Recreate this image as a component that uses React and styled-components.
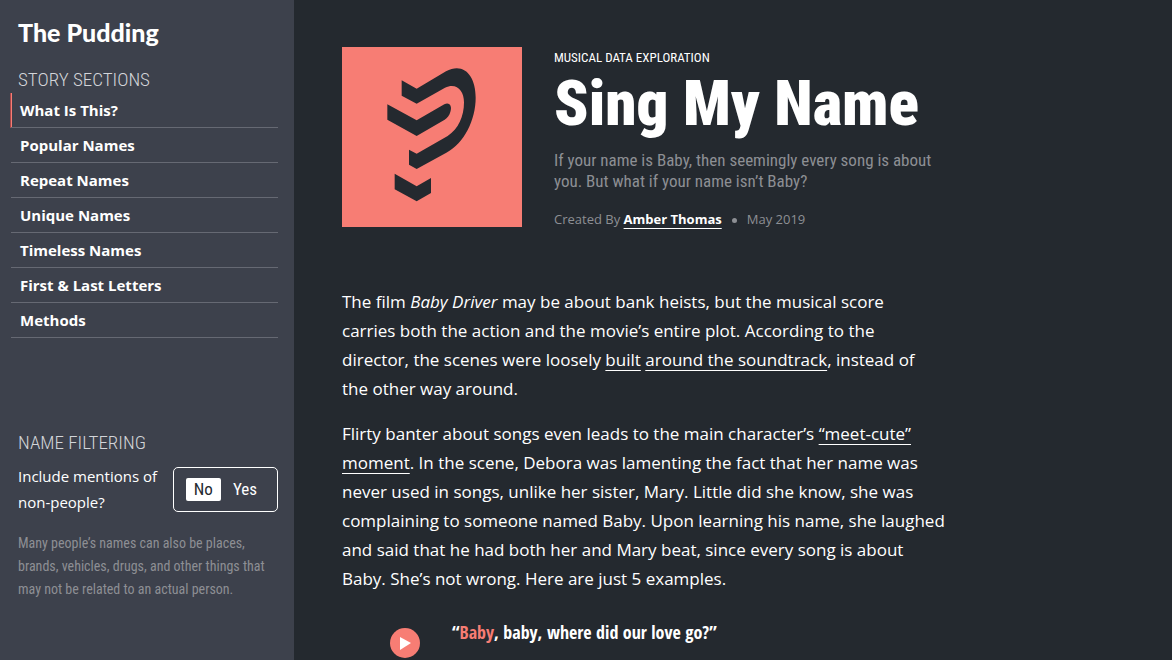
import React, { useState } from 'react';
import styled, { createGlobalStyle } from 'styled-components';

const GlobalStyle = createGlobalStyle`
  :root {
    --bg: #24292f;
    --side: #3d414c;
    --accent: #f77d74;
    --muted: #8d8f94;
    --sans: 'Open Sans', sans-serif;
    --narrow: 'Roboto Condensed', sans-serif;
  }

  * {
    box-sizing: border-box;
  }

  body {
    margin: 0;
    background: var(--bg);
    color: #ffffff;
    font-family: var(--sans);
  }
`;

const Page = styled.div`
  display: flex;
  min-height: 100vh;
`;

const Sidebar = styled.aside`
  flex: 0 0 294px;
  padding: 15px 16px 16px 11px;
  background: var(--side);
`;

const Logo = styled.a`
  display: block;
  padding-left: 7px;
  margin-bottom: 18px;
  color: #ffffff;
  font-family: Lato, sans-serif;
  font-weight: 900;
  font-size: 25px;
  line-height: 34px;
  text-decoration: none;
`;

const SideTitle = styled.h2`
  margin: 0;
  padding-left: 7px;
  color: #d3d5d9;
  font-family: var(--narrow);
  font-weight: 300;
  font-size: 19px;
  line-height: 26px;
  text-transform: uppercase;
`;

const NavLink = styled.a`
  display: block;
  padding-left: 9px;
  border-bottom: 1px solid #666973;
  box-shadow: ${({ $active }) => ($active ? 'inset 1px 0 0 #f77d74, -1px 0 0 #a8484a' : 'none')};
  color: #ffffff;
  font-weight: 700;
  font-size: 15px;
  line-height: 34px;
  text-decoration: none;
`;

const Filtering = styled.section`
  margin-top: 92px;
`;

const FilterRow = styled.div`
  display: flex;
  align-items: center;
  justify-content: space-between;
  margin-top: 7px;
  padding-left: 7px;
`;

const FilterLabel = styled.span`
  flex: 0 1 150px;
  font-size: 15px;
  line-height: 26px;
`;

const Toggle = styled.div`
  display: flex;
  gap: 4px;
  padding: 10px 12px;
  border: 1px solid #ffffff;
  border-radius: 5px;
`;

const ToggleButton = styled.button`
  height: 23px;
  padding: 0 8px;
  border: 0;
  border-radius: 2px;
  background: ${({ $on }) => ($on ? '#ffffff' : 'transparent')};
  color: ${({ $on }) => ($on ? '#24292f' : '#ffffff')};
  font-family: var(--narrow);
  font-size: 17px;
  line-height: 23px;
  cursor: pointer;
`;

const FilterNote = styled.p`
  margin: 17px 0 0;
  padding-left: 7px;
  color: var(--muted);
  font-family: var(--narrow);
  font-size: 14px;
  line-height: 23px;
`;

const Main = styled.main`
  flex: 1;
  min-width: 0;
  padding: 47px 48px 0;
`;

const Article = styled.article`
  max-width: 605px;
`;

const Header = styled.header`
  display: flex;
  align-items: flex-start;
  gap: 32px;
  margin-bottom: 57px;
`;

const Cover = styled.svg`
  flex: 0 0 180px;
  height: 180px;
  background: var(--accent);
`;

const Kicker = styled.p`
  margin: 0;
  font-family: var(--narrow);
  font-size: 13px;
  line-height: 22px;
  text-transform: uppercase;
`;

const Title = styled.h1`
  margin: 2px 0 13px;
  font-family: var(--narrow);
  font-weight: 900;
  font-size: 63px;
  line-height: 66px;
  white-space: nowrap;
`;

const Summary = styled.p`
  margin: 0 0 16px;
  color: var(--muted);
  font-family: var(--narrow);
  font-size: 17px;
  line-height: 21px;
`;

const Byline = styled.p`
  margin: 0;
  color: var(--muted);
  font-size: 13px;
  line-height: 22px;
`;

const Dot = styled.span`
  display: inline-block;
  width: 5px;
  height: 5px;
  margin: 0 10px;
  border-radius: 50%;
  background: var(--muted);
  vertical-align: middle;
`;

const TextLink = styled.a`
  color: #ffffff;
  font-weight: ${({ $bold }) => ($bold ? 700 : 400)};
  text-decoration: underline;
  text-decoration-thickness: 1px;
  text-decoration-skip-ink: none;
  text-underline-offset: 4px;
`;

const Paragraph = styled.p`
  max-width: ${({ $lead }) => ($lead ? '590px' : 'none')};
  margin: 0 0 16px;
  font-size: 17px;
  line-height: 29px;
`;

const Track = styled.div`
  display: flex;
  align-items: flex-start;
  gap: 32px;
  margin-top: 27px;
  padding-left: 48px;
`;

const PlayButton = styled.button`
  display: flex;
  width: 30px;
  height: 30px;
  margin-top: 8px;
  padding: 0;
  border: 0;
  border-radius: 50%;
  background: var(--accent);
  cursor: pointer;
`;

const Lyric = styled.p`
  margin: 0;
  font-family: 'Open Sans Condensed', sans-serif;
  font-weight: 700;
  font-size: 18px;
  line-height: 24px;

  em {
    color: var(--accent);
    font-style: normal;
  }
`;

const sections = [
  'What Is This?',
  'Popular Names',
  'Repeat Names',
  'Unique Names',
  'Timeless Names',
  'First & Last Letters',
  'Methods',
];

const App = () => {
  const [active, setActive] = useState(sections[0]);
  const [include, setInclude] = useState('No');

  return (
    <Page>
      <GlobalStyle />
      <Sidebar>
        <Logo href="#home">The Pudding</Logo>
        <SideTitle>Story Sections</SideTitle>
        <nav>
          {sections.map((name) => (
            <NavLink key={name} href="#story" $active={name === active} onClick={() => setActive(name)}>
              {name}
            </NavLink>
          ))}
        </nav>
        <Filtering>
          <SideTitle>Name Filtering</SideTitle>
          <FilterRow>
            <FilterLabel id="filter-label">Include mentions of non-people?</FilterLabel>
            <Toggle role="group" aria-labelledby="filter-label">
              {['No', 'Yes'].map((value) => (
                <ToggleButton
                  key={value}
                  type="button"
                  $on={include === value}
                  aria-pressed={include === value}
                  onClick={() => setInclude(value)}
                >
                  {value}
                </ToggleButton>
              ))}
            </Toggle>
          </FilterRow>
          <FilterNote>
            Many people’s names can also be places, brands, vehicles, drugs, and other things that may
            not be related to an actual person.
          </FilterNote>
        </Filtering>
      </Sidebar>
      <Main>
        <Article id="story">
          <Header>
            <Cover viewBox="0 0 540 540" fill="#24292f" aria-hidden="true">
              <path d="M179 100 L224 125 L312 73 C365 44 401 86 401 152 C401 218 367 288 313 317 L224 366 L201 353 V308 L224 320 L317 267 C349 246 366 208 366 166 C366 130 343 106 309 122 L224 170 L179 146 Z" />
              <path d="M136 172 L224 220 L307 172 C324 164 331 180 325 195 C322 206 316 213 308 218 L224 267 L136 218 Z" />
              <path d="M158 380 L224 418 L267 393 V438 L224 463 L158 427 Z" />
            </Cover>
            <div>
              <Kicker>Musical Data Exploration</Kicker>
              <Title>Sing My Name</Title>
              <Summary>
                If your name is Baby, then seemingly every song is about you. But what if your name
                isn’t Baby?
              </Summary>
              <Byline>
                Created By{' '}
                <TextLink $bold href="#author">
                  Amber Thomas
                </TextLink>
                <Dot />
                May 2019
              </Byline>
            </div>
          </Header>
          <Paragraph $lead>
            The film <em>Baby Driver</em> may be about bank heists, but the musical score carries both
            the action and the movie’s entire plot. According to the director, the scenes were loosely{' '}
            <TextLink href="#built">built</TextLink>{' '}
            <TextLink href="#soundtrack">around the soundtrack</TextLink>, instead of the other way
            around.
          </Paragraph>
          <Paragraph>
            Flirty banter about songs even leads to the main character’s{' '}
            <TextLink href="#moment">“meet-cute” moment</TextLink>. In the scene, Debora was lamenting
            the fact that her name was never used in songs, unlike her sister, Mary. Little did she
            know, she was complaining to someone named Baby. Upon learning his name, she laughed and
            said that he had both her and Mary beat, since every song is about Baby. She’s not wrong.
            Here are just 5 examples.
          </Paragraph>
          <Track>
            <PlayButton type="button" aria-label="Play">
              <svg width="30" height="30" viewBox="0 0 30 30" fill="#ffffff" aria-hidden="true">
                <path d="M10 9 L21 15 L10 22 Z" />
              </svg>
            </PlayButton>
            <Lyric>
              “<em>Baby</em>, baby, where did our love go?”
            </Lyric>
          </Track>
        </Article>
      </Main>
    </Page>
  );
};

export default App;
